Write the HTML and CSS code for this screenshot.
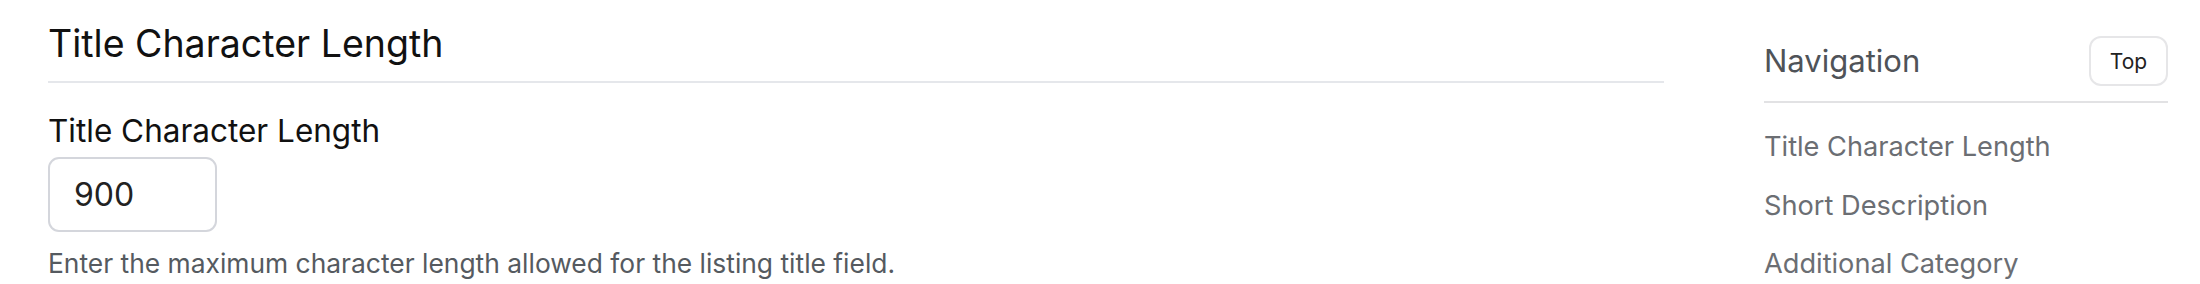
FILE: index.html
```html
<!DOCTYPE html>
<html lang="en">
<head>
<meta charset="utf-8">
<title>Settings</title>
<link rel="stylesheet" href="styles.css">
</head>
<body>
<div class="page">
  <main class="main">
    <h2 class="section-title">Title Character Length</h2>
    <div class="field">
      <label class="field-label" for="tcl">Title Character Length</label>
      <input class="field-input" id="tcl" type="text" value="900">
      <p class="field-help">Enter the maximum character length allowed for the listing title field.</p>
    </div>
  </main>
  <aside class="sidebar">
    <div class="nav-head">
      <h3 class="nav-title">Navigation</h3>
      <button class="top-btn" type="button">Top</button>
    </div>
    <ul class="nav-list">
      <li><a class="nav-link" href="#">Title Character Length</a></li>
      <li><a class="nav-link" href="#">Short Description</a></li>
      <li><a class="nav-link" href="#">Additional Category</a></li>
    </ul>
  </aside>
</div>
</body>
</html>
```

FILE: styles.css
```css
* { box-sizing: border-box; }
html, body { margin: 0; padding: 0; background: #fff; }
body { font-family: Inter, "Noto Sans", sans-serif; color: #111; overflow: hidden; }

.page {
  display: flex;
  gap: 100px;
  padding: 22px 32px 0 48px;
}
.main { flex: 1; min-width: 0; }
.sidebar { width: 404px; flex: none; padding-top: 14px; }

.section-title {
  margin: 0;
  font-size: 37.5px;
  font-weight: 400;
  line-height: 44px;
  color: #111;
  padding-bottom: 15px;
  border-bottom: 2px solid #e5e7eb;
}
.field { margin-top: 29px; display: flex; flex-direction: column; align-items: flex-start; }
.field-label {
  font-size: 31.5px;
  line-height: 38px;
  color: #111;
}
.field-input {
  margin-top: 7px;
  width: 169px;
  height: 75px;
  border: 2px solid #d4d6dc;
  border-radius: 11px;
  padding: 0 24px;
  font-family: inherit;
  font-size: 32px;
  color: #222;
  background: #fff;
  outline: none;
}
.field-help {
  margin: 14px 0 0;
  font-size: 26.4px;
  line-height: 34px;
  color: #555a60;
}

.nav-head {
  display: flex;
  align-items: center;
  justify-content: space-between;
  padding-bottom: 15px;
  border-bottom: 2px solid #e2e2e4;
}
.nav-title {
  margin: 0;
  font-size: 31px;
  font-weight: 400;
  line-height: 38px;
  color: #4f5358;
}
.top-btn {
  width: 79px;
  height: 50px;
  border: 2px solid #e6e6e8;
  border-radius: 12px;
  background: #fff;
  font-family: inherit;
  font-size: 21px;
  color: #222;
  padding: 0;
}
.nav-list {
  list-style: none;
  margin: 27px 0 0;
  padding: 0;
  display: flex;
  flex-direction: column;
  gap: 24.5px;
}
.nav-link {
  display: block;
  font-size: 27.2px;
  line-height: 34px;
  color: #6b6e73;
  text-decoration: none;
}
```
